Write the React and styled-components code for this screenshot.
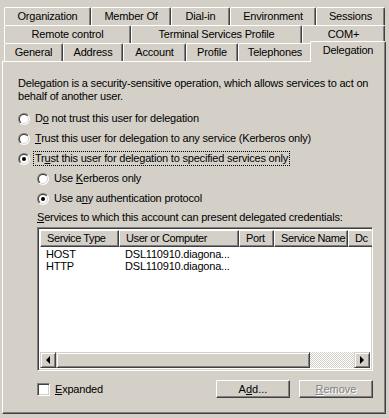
import styled, { createGlobalStyle, css } from "styled-components";
import { useId } from "react";

const face = "#d4d0c8";
const shadow = "#808080";
const dark = "#404040";

const GlobalStyle = createGlobalStyle`
  body {
    margin: 0;
    background: ${face};
    font-family: "Liberation Sans", Arial, sans-serif;
    font-size: 11px;
    letter-spacing: -0.2px;
    color: #000;
  }
`;

const rows = [
  [
    { label: "Organization", w: 87 },
    { label: "Member Of", w: 80 },
    { label: "Dial-in", w: 59 },
    { label: "Environment", w: 86 },
    { label: "Sessions", w: 69 },
  ],
  [
    { label: "Remote control", w: 127 },
    { label: "Terminal Services Profile", w: 171 },
    { label: "COM+", w: 83 },
  ],
  [
    { label: "General", w: 59 },
    { label: "Address", w: 60 },
    { label: "Account", w: 63 },
    { label: "Profile", w: 52 },
    { label: "Telephones", w: 74 },
    { label: "Delegation", w: 73, active: true },
  ],
];

const services = [
  { type: "HOST", user: "DSL110910.diagona..." },
  { type: "HTTP", user: "DSL110910.diagona..." },
];

// last column is cut by the list edge, as in the dialog
const columns = [
  { label: "Service Type", w: 79 },
  { label: "User or Computer", w: 120 },
  { label: "Port", w: 35 },
  { label: "Service Name", w: 74 },
  { label: "Dc", w: 40 },
];

const Radio = ({ checked }) => {
  const id = useId();
  return (
    <svg width="12" height="12" viewBox="0 0 12 12">
      <defs>
        <linearGradient id={id + "o"} x1="0" y1="0" x2="1" y2="1">
          <stop offset="0.5" stopColor={shadow} />
          <stop offset="0.5" stopColor="#fff" />
        </linearGradient>
        <linearGradient id={id + "i"} x1="0" y1="0" x2="1" y2="1">
          <stop offset="0.5" stopColor={dark} />
          <stop offset="0.5" stopColor={face} />
        </linearGradient>
      </defs>
      <circle cx="6" cy="6" r="6" fill={`url(#${id}o)`} />
      <circle cx="6" cy="6" r="5" fill={`url(#${id}i)`} />
      <circle cx="6" cy="6" r="4" fill="#fff" />
      {checked && <circle cx="6" cy="6" r="2" fill="#000" />}
    </svg>
  );
};

const Option = ({ checked, focus, indent, children }) => (
  <OptionRow $indent={indent}>
    <Radio checked={checked} />
    <OptionText $focus={focus}>{children}</OptionText>
  </OptionRow>
);

const App = () => {
  return (
    <>
      <GlobalStyle />
      <Win>
        <TabStrip>
          {rows.map((row, i) => (
            <TabRow key={i}>
              {row.map((t) => (
                <Tab key={t.label} $w={t.w} $active={t.active}>
                  {t.label}
                </Tab>
              ))}
            </TabRow>
          ))}
        </TabStrip>
        <Panel>
          <Intro>
            Delegation is a security-sensitive operation, which allows services to act on
            <br />
            behalf of another user.
          </Intro>
          <Options>
            <Option>
              D<u>o</u> not trust this user for delegation
            </Option>
            <Option>
              <u>T</u>rust this user for delegation to any service (Kerberos only)
            </Option>
            <Option checked focus>
              Tr<u>u</u>st this user for delegation to specified services only
            </Option>
            <Option indent>
              Use <u>K</u>erberos only
            </Option>
            <Option indent checked>
              Use a<u>n</u>y authentication protocol
            </Option>
          </Options>
          <Indented>
            <Label>
              <u>S</u>ervices to which this account can present delegated credentials:
            </Label>
            <ListView>
              <Header>
                {columns.map((c) => (
                  <HeaderCell key={c.label} $w={c.w}>
                    {c.label}
                  </HeaderCell>
                ))}
              </Header>
              <Rows>
                {services.map((s) => (
                  <Row key={s.type}>
                    <Cell $w={79}>{s.type}</Cell>
                    <Cell $w={120}>{s.user}</Cell>
                  </Row>
                ))}
              </Rows>
              <HScroll>
                <ScrollBtn>
                  <Arrow $dir="left" />
                </ScrollBtn>
                <Thumb />
                <Track />
                <ScrollBtn>
                  <Arrow $dir="right" />
                </ScrollBtn>
              </HScroll>
            </ListView>
            <Footer>
              <Check>
                <CheckBox />
                <span>
                  <u>E</u>xpanded
                </span>
              </Check>
              <Buttons>
                <Button>
                  A<u>d</u>d...
                </Button>
                <Button disabled>
                  <u>R</u>emove
                </Button>
              </Buttons>
            </Footer>
          </Indented>
        </Panel>
      </Win>
    </>
  );
};

const raised = css`
  border-top: 1px solid #fff;
  border-left: 1px solid #fff;
  border-right: 1px solid ${dark};
  border-bottom: 1px solid ${dark};
  box-shadow: inset -1px -1px 0 ${shadow};
`;

const sunken = css`
  border-top: 1px solid ${shadow};
  border-left: 1px solid ${shadow};
  border-right: 1px solid #fff;
  border-bottom: 1px solid #fff;
  box-shadow: inset 1px 1px 0 ${dark}, inset -1px -1px 0 ${face};
`;

const Win = styled.div`
  width: 389px;
  height: 418px;
  box-sizing: border-box;
  padding: 7px 3px 4px 2px;
  display: flex;
  flex-direction: column;
  background: ${face};
`;

const TabStrip = styled.div`
  display: flex;
  flex-direction: column;
`;

const TabRow = styled.div`
  display: flex;
  height: 18px;
  padding-left: 2px;
`;

const Tab = styled.div`
  box-sizing: border-box;
  width: ${(p) => p.$w}px;
  height: 18px;
  display: flex;
  align-items: center;
  justify-content: center;
  padding-bottom: 1px;
  border-top: 1px solid #fff;
  border-left: 1px solid #fff;
  border-right: 1px solid ${dark};
  border-radius: 2px 2px 0 0;
  box-shadow: inset -1px 0 0 ${shadow};
  white-space: nowrap;
  ${(p) =>
    p.$active &&
    css`
      position: relative;
      z-index: 1;
      width: ${p.$w + 3}px;
      height: 21px;
      margin: -2px 0 -1px -2px;
      padding-bottom: 4px;
      background: ${face};
    `}
`;

const Panel = styled.div`
  flex: 1;
  ${raised};
  padding: 15px 0 0 15px;
  display: flex;
  flex-direction: column;
`;

const Intro = styled.p`
  margin: 0;
  white-space: nowrap;
  line-height: 13px;
`;

const Options = styled.div`
  display: flex;
  flex-direction: column;
  gap: 7px;
  margin-top: 9px;
`;

const OptionRow = styled.div`
  display: flex;
  align-items: center;
  gap: 4px;
  height: 13px;
  padding-left: ${(p) => (p.$indent ? 19 : 0)}px;
`;

const OptionText = styled.span`
  padding: 0 1px;
  line-height: 13px;
  outline: ${(p) => (p.$focus ? "1px dotted #000" : "none")};
`;

const Indented = styled.div`
  padding-left: 19px;
  display: flex;
  flex-direction: column;
`;

const Label = styled.div`
  margin-top: 6px;
  height: 13px;
  line-height: 13px;
`;

const ListView = styled.div`
  margin-top: 3px;
  width: 336px;
  height: 144px;
  box-sizing: border-box;
  ${sunken};
  padding: 2px;
  background: #fff;
  display: flex;
  flex-direction: column;
  overflow: hidden;
`;

const Header = styled.div`
  display: flex;
  height: 17px;
  flex-shrink: 0;
`;

const HeaderCell = styled.div`
  box-sizing: border-box;
  flex-shrink: 0;
  width: ${(p) => p.$w}px;
  height: 17px;
  line-height: 14px;
  padding-left: 6px;
  letter-spacing: -0.4px;
  background: ${face};
  ${raised};
  white-space: nowrap;
  overflow: hidden;
`;

const Rows = styled.div`
  flex: 1;
  display: flex;
  flex-direction: column;
  padding-top: 1px;
`;

const Row = styled.div`
  display: flex;
  height: 12px;
  line-height: 12px;
`;

const Cell = styled.div`
  width: ${(p) => p.$w}px;
  padding-left: 6px;
  box-sizing: border-box;
  white-space: nowrap;
`;

const HScroll = styled.div`
  display: flex;
  height: 16px;
  flex-shrink: 0;
`;

const ScrollBtn = styled.div`
  box-sizing: border-box;
  width: 16px;
  height: 16px;
  background: ${face};
  border-top: 1px solid ${face};
  border-left: 1px solid ${face};
  border-right: 1px solid ${dark};
  border-bottom: 1px solid ${dark};
  box-shadow: inset 1px 1px 0 #fff, inset -1px -1px 0 ${shadow};
  display: flex;
  align-items: center;
  justify-content: center;
`;

const Arrow = styled.span`
  width: 0;
  height: 0;
  border-top: 4px solid transparent;
  border-bottom: 4px solid transparent;
  ${(p) =>
    p.$dir === "left"
      ? css`
          border-right: 4px solid #000;
        `
      : css`
          border-left: 4px solid #000;
        `}
`;

const Thumb = styled.div`
  box-sizing: border-box;
  width: 254px;
  height: 16px;
  background: ${face};
  border-top: 1px solid ${face};
  border-left: 1px solid ${face};
  border-right: 1px solid ${dark};
  border-bottom: 1px solid ${dark};
  box-shadow: inset 1px 1px 0 #fff, inset -1px -1px 0 ${shadow};
`;

const Track = styled.div`
  flex: 1;
  background-color: ${face};
  background-image: conic-gradient(#fff 25%, ${face} 0 50%, #fff 0 75%, ${face} 0);
  background-size: 2px 2px;
`;

const Footer = styled.div`
  display: flex;
  align-items: center;
  justify-content: space-between;
  width: 336px;
  margin-top: 9px;
`;

const Check = styled.label`
  display: flex;
  align-items: center;
  gap: 5px;
`;

const CheckBox = styled.span`
  box-sizing: border-box;
  width: 13px;
  height: 13px;
  background: #fff;
  ${sunken};
`;

const Buttons = styled.div`
  display: flex;
  gap: 9px;
`;

const Button = styled.button`
  box-sizing: border-box;
  width: 74px;
  height: 18px;
  padding: 0;
  font: inherit;
  color: #000;
  background: ${face};
  ${raised};
  &:disabled {
    color: ${shadow};
    text-shadow: 1px 1px 0 #fff;
  }
`;

export default App;
